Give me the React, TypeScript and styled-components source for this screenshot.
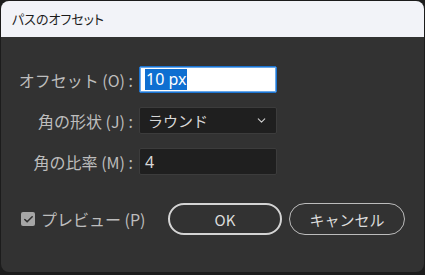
import React from "react";
import styled, { createGlobalStyle } from "styled-components";
import { ChevronDown, Check } from "lucide-react";

const GlobalStyle = createGlobalStyle`
  html, body {
    margin: 0;
    padding: 0;
    background: #1c1c1c;
    width: 425px;
    height: 275px;
    overflow: hidden;
  }
  body {
    font-family: "Noto Sans CJK JP", "Noto Sans", sans-serif;
  }
`;

const Window = styled.div`
  box-sizing: border-box;
  margin: 1px 1px 0 1px;
  width: 423px;
  height: 271px;
  border-radius: 8px;
  overflow: hidden;
  background: #323232;
  display: flex;
  flex-direction: column;
`;

const TitleBar = styled.div`
  height: 36px;
  flex: none;
  background: #f2f3f8;
  color: #1b1b1b;
  font-feature-settings: "palt";
  font-size: 13px;
  display: flex;
  align-items: center;
  padding-left: 11px;
  padding-bottom: 1px;
  box-sizing: border-box;
`;

const Body = styled.div`
  padding: 29px 19px 0 0;
  display: flex;
  flex-direction: column;
`;

const Form = styled.div`
  display: grid;
  grid-template-columns: 132px 138px;
  column-gap: 6px;
  row-gap: 14px;
  align-items: center;
`;

const Label = styled.label`
  color: #bdbdbd;
  font-size: 16px;
  text-align: right;
  white-space: nowrap;
`;

const Field = styled.div<{ $focused?: boolean }>`
  box-sizing: border-box;
  height: 27px;
  display: flex;
  align-items: center;
  padding: 0 5px;
  font-family: "Noto Sans", "Noto Sans CJK JP", sans-serif;
  font-size: 16px;
  border-radius: 2px;
  background: ${(p) => (p.$focused ? "#ffffff" : "#1f1f1f")};
  border: 1px solid ${(p) => (p.$focused ? "#1b74d2" : "#3c3c3c")};
  box-shadow: ${(p) => (p.$focused ? "inset 0 0 0 1px #6aa8e8" : "none")};
  color: #d8d8d8;
`;

const Selected = styled.span`
  background: #0f6fd1;
  color: #ffffff;
  padding: 0 1px;
  line-height: 21px;
`;

const SelectField = styled(Field)`
  justify-content: space-between;
  padding: 0 8px 0 8px;
  font-family: "Noto Sans CJK JP", sans-serif;
  font-size: 15px;
`;

const Footer = styled.div`
  margin-top: 28px;
  display: flex;
  align-items: center;
  justify-content: space-between;
  padding-left: 20px;
`;

const CheckRow = styled.label`
  display: flex;
  align-items: center;
  gap: 6px;
  color: #bdbdbd;
  font-size: 16px;
`;

const Box = styled.span`
  width: 14px;
  height: 14px;
  border-radius: 2px;
  background: #a6a6a6;
  display: flex;
  align-items: center;
  justify-content: center;
  color: #303030;
`;

const Buttons = styled.div`
  display: flex;
  gap: 7px;
`;

const Button = styled.button<{ $primary?: boolean; $w: number }>`
  box-sizing: border-box;
  width: ${(p) => p.$w}px;
  height: 32px;
  border-radius: 16px;
  background: transparent;
  border: ${(p) => (p.$primary ? "2px solid #d4d4d4" : "1px solid #bcbcbc")};
  color: #dcdcdc;
  font-size: 15px;
  font-family: "Noto Sans CJK JP", "Noto Sans", sans-serif;
  padding: 0;
`;

export default function App() {
  return (
    <>
      <GlobalStyle />
      <Window>
        <TitleBar>パスのオフセット</TitleBar>
        <Body>
          <Form>
            <Label>オフセット (O) :</Label>
            <Field $focused>
              <Selected>10 px</Selected>
            </Field>
            <Label>角の形状 (J) :</Label>
            <SelectField>
              <span>ラウンド</span>
              <ChevronDown size={13} strokeWidth={2} color="#cfcfcf" />
            </SelectField>
            <Label>角の比率 (M) :</Label>
            <Field>4</Field>
          </Form>
          <Footer>
            <CheckRow>
              <Box>
                <Check size={11} strokeWidth={3.5} />
              </Box>
              プレビュー (P)
            </CheckRow>
            <Buttons>
              <Button $primary $w={114}>OK</Button>
              <Button $w={116}>キャンセル</Button>
            </Buttons>
          </Footer>
        </Body>
      </Window>
    </>
  );
}
